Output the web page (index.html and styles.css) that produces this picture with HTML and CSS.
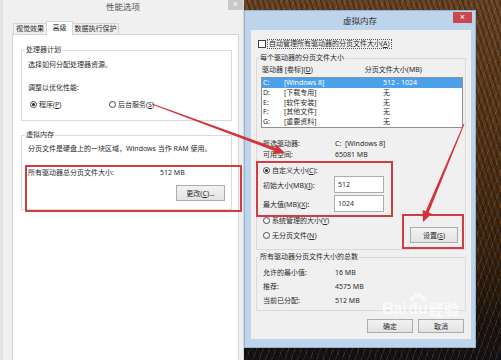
FILE: index.html
```html
<!DOCTYPE html>
<html lang="zh-CN">
<head>
  <meta charset="UTF-8" />
  <meta name="viewport" content="width=device-width, initial-scale=1.0"/>
  <title>虚拟内存</title>
  <link rel="stylesheet" href="styles.css">
</head>
<body>
<div class="desktop">

  <!-- 性能选项 window (behind) -->
  <div class="win perf">
    <div class="titlebar">
      <span class="title">性能选项</span>
      <span class="close">&#215;</span>
    </div>
    <div class="tabs">
      <div class="tab t1">视觉效果</div>
      <div class="tab t2 active">高级</div>
      <div class="tab t3">数据执行保护</div>
    </div>
    <div class="panel">
      <div class="group cpu">
        <div class="legend">处理器计划</div>
        <p class="line mt5">选择如何分配处理器资源。</p>
        <p class="line mt13">调整以优化性能:</p>
        <div class="line radios mt7">
          <label class="opt first"><span class="radio on"></span>程序(<u>P</u>)</label>
          <label class="opt"><span class="radio"></span>后台服务(<u>S</u>)</label>
        </div>
      </div>
      <div class="group vm">
        <div class="legend">虚拟内存</div>
        <p class="line mt4">分页文件是硬盘上的一块区域，Windows 当作 RAM 使用。</p>
        <div class="line total mt14"><span class="lbl">所有驱动器总分页文件大小:</span><span>512 MB</span></div>
        <button class="btn change">更改(<u>C</u>)...</button>
      </div>
    </div>
  </div>

  <!-- 虚拟内存 dialog -->
  <div class="win vmem">
    <div class="titlebar">
      <span class="title">虚拟内存</span>
      <span class="close">&#215;</span>
    </div>
    <div class="body">
      <div class="line check-row">
        <span class="checkbox"></span>
        <span class="focus">自动管理所有驱动器的分页文件大小(<u>A</u>)</span>
      </div>

      <div class="group drives">
        <div class="legend">每个驱动器的分页文件大小</div>
        <div class="line head mt2">
          <span class="hcol">驱动器 [卷标](<u>D</u>)</span>
          <span>分页文件大小(MB)</span>
        </div>
        <div class="listbox">
          <div class="row sel"><span class="c1">C:</span><span class="c2">[Windows 8]</span><span>512 - 1024</span></div>
          <div class="row"><span class="c1">D:</span><span class="c2">[下载专用]</span><span>无</span></div>
          <div class="row"><span class="c1">E:</span><span class="c2">[软件安装]</span><span>无</span></div>
          <div class="row"><span class="c1">F:</span><span class="c2">[其他文件]</span><span>无</span></div>
          <div class="row"><span class="c1">G:</span><span class="c2">[重要资料]</span><span>无</span></div>
        </div>

        <div class="line kv mt11"><span class="k">所选驱动器:</span><span>C:&nbsp;&nbsp;[Windows 8]</span></div>
        <div class="line kv mt1"><span class="k">可用空间:</span><span>65081 MB</span></div>

        <label class="line opt-row mt6"><span class="radio on"></span>自定义大小(<u>C</u>):</label>
        <div class="field">
          <span class="k">初始大小(MB)(<u>I</u>):</span>
          <span class="input">512</span>
        </div>
        <div class="field mt2">
          <span class="k">最大值(MB)(<u>X</u>):</span>
          <span class="input">1024</span>
        </div>

        <div class="tail">
          <div class="tail-opts">
            <label class="line opt-row"><span class="radio"></span>系统管理的大小(<u>Y</u>)</label>
            <label class="line opt-row mt5"><span class="radio"></span>无分页文件(<u>N</u>)</label>
          </div>
          <button class="btn set">设置(<u>S</u>)</button>
        </div>
      </div>

      <div class="group totals">
        <div class="legend">所有驱动器分页文件大小的总数</div>
        <div class="line kv mt6"><span class="k">允许的最小值:</span><span>16 MB</span></div>
        <div class="line kv mt4"><span class="k">推荐:</span><span>4575 MB</span></div>
        <div class="line kv mt4"><span class="k">当前已分配:</span><span>512 MB</span></div>
      </div>

      <div class="actions">
        <button class="btn act">确定</button>
        <button class="btn act">取消</button>
      </div>
    </div>
  </div>

  <!-- annotations -->
  <div class="mark m1"></div>
  <div class="mark m2"></div>
  <div class="mark m3"></div>

  <svg class="arrows" width="501" height="360" viewBox="0 0 501 360">
    <polygon points="151.9,104.4 274.1,150.7 273.0,153.9 285,153 276.4,144.5 275.3,147.7 152.1,103.6" />
    <polygon points="463.6,123.8 425.7,211.2 422.6,209.9 423,222 431.8,213.7 428.7,212.4 464.4,124.2" />
  </svg>

  <div class="wm">
    <span>Bai</span>
    <span class="paw">
      <svg width="20" height="9" viewBox="0 0 20 11">
        <ellipse cx="3" cy="7" rx="2.4" ry="3" />
        <ellipse cx="7.5" cy="3" rx="2.4" ry="3" />
        <ellipse cx="12.5" cy="3" rx="2.4" ry="3" />
        <ellipse cx="17" cy="7" rx="2.4" ry="3" />
      </svg>
      <span>du</span>
    </span>
    <span class="cn">经验</span>
  </div>

</div>
</body>
</html>
```

FILE: styles.css
```css
* {
  box-sizing: border-box;
  margin: 0; padding: 0;
}
body {
  font-family: "Noto Sans", "Noto Sans CJK SC", sans-serif;
  font-size: 7px;
  color: #2b2b2b;
}
u {
  text-decoration: underline;
}

.desktop {
  position: relative;
  width: 501px;
  height: 360px;
  overflow: hidden;
  background:
    repeating-linear-gradient(72deg, rgba(0,0,0,0.28) 0 2px, rgba(0,0,0,0) 2px 5px),
    repeating-linear-gradient(110deg, rgba(190,120,60,0.25) 0 1px, rgba(0,0,0,0) 1px 6px),
    linear-gradient(180deg, #6a4426 0%, #553519 40%, #3a2512 70%, #1c1510 90%, #141218 100%);
}

.win {
  position: absolute;
}
.titlebar {
  position: relative;
  text-align: center;
}
.title {
  font-size: 8.5px;
  color: #3a3a3a;
}
.close {
  position: absolute;
  color: #fff;
  text-align: center;
  font-family: "Liberation Sans", sans-serif;
}

.line {
  height: 10px;
  line-height: 10px;
  white-space: nowrap;
}
.mt1 { margin-top: 1px; }
.mt2 { margin-top: 2px; }
.mt4 { margin-top: 4px; }
.mt5 { margin-top: 5px; }
.mt6 { margin-top: 6px; }
.mt7 { margin-top: 7px; }
.mt11 { margin-top: 11px; }
.mt13 { margin-top: 13px; }
.mt14 { margin-top: 14px; }

.group {
  border: 1px solid #dadada;
}
.legend {
  display: table;
  height: 10px;
  line-height: 10px;
  margin: -6px 0 0 -3px;
  padding: 0 1px;
  white-space: nowrap;
}

.radio {
  display: inline-block;
  width: 7px; height: 7px;
  border: 1px solid #444;
  border-radius: 50%;
  background: #fff;
  margin-right: 2px;
  vertical-align: -1px;
  position: relative;
}
.radio.on::after {
  content: "";
  position: absolute;
  left: 1px; top: 1px;
  width: 3px; height: 3px;
  border-radius: 50%;
  background: #222;
}

.btn {
  display: block;
  font-family: inherit;
  font-size: 7px;
  color: #2b2b2b;
  background: linear-gradient(#f2f2f2, #e3e3e3);
  border: 1px solid #acacac;
}

/* 性能选项 */
.perf {
  left: 0; top: 0;
  width: 244px; height: 360px;
  background: #f0f0f0;
  border-left: 3px solid #e2e2e2;
  border-right: 1px solid #d6d6d6;
}
.perf .titlebar {
  height: 21px;
}
.perf .title {
  line-height: 14px;
  color: #555;
}
.perf .close {
  right: 0; top: 0;
  width: 15px; height: 10px;
  background: #c8c8c8;
  font-size: 9px;
  line-height: 9px;
}

.tabs {
  display: flex;
  align-items: flex-end;
  height: 13px;
  margin-left: 10px;
}
.tab {
  height: 11px;
  line-height: 10px;
  text-align: center;
  border: 1px solid #d6d6d6;
  border-bottom: none;
  background: #f0f0f0;
  white-space: nowrap;
}
.t1 { width: 34px; }
.t2 { width: 27px; margin-left: -1px; }
.t3 { width: 47px; margin-left: -1px; }
.tab.active {
  height: 14px;
  line-height: 12px;
  background: #fff;
  margin-bottom: -1px;
  position: relative;
  z-index: 1;
}

.panel {
  margin-left: 9px;
  width: 227px;
  height: 340px;
  background: #fff;
  border: 1px solid #d6d6d6;
  padding: 0 6px 0 8px;
}
.panel .legend {
  background: #fff;
}
.cpu {
  margin-top: 15px;
  padding: 0 6px 10px;
}
.vm {
  margin-top: 14px;
  padding: 0 6px 8px;
}
.radios {
  display: flex;
  align-items: center;
}
.opt.first {
  margin-left: 2px;
  width: 79px;
}
.total .lbl {
  display: inline-block;
  width: 132px;
}
.change {
  width: 49px;
  height: 16px;
  margin: 7px 0 0 auto;
}

/* 虚拟内存 */
.vmem {
  left: 244px; top: 10px;
  width: 232px; height: 338px;
  background: #bed4eb;
  border: 1px solid #93b3d6;
}
.vmem .titlebar {
  height: 19px;
  line-height: 19px;
}
.vmem .title {
  color: #333;
}
.vmem .close {
  left: 208px; top: 1px;
  width: 19px; height: 11px;
  background: #c9474d;
  font-size: 9px;
  line-height: 10px;
}
.body {
  margin: 0 4px 0 6px;
  height: 309px;
  background: #f0f0f0;
  padding: 9px 5px 0;
}
.body .legend {
  background: #f0f0f0;
}
.check-row {
  display: flex;
  align-items: center;
  padding-left: 2px;
}
.checkbox {
  width: 8px; height: 8px;
  border: 1px solid #444;
  background: #fff;
  margin-right: 1px;
}
.focus {
  height: 10px;
  line-height: 8px;
  padding: 0 1px;
  border: 1px dotted #555;
}

.drives {
  margin-top: 9px;
  padding: 0 2px 6px 5px;
}
.head .hcol {
  display: inline-block;
  width: 101px;
}
.listbox {
  margin: 2px 0 0 -1px;
  height: 51px;
  background: #fff;
  border: 1px solid #8a8f98;
}
.row {
  display: flex;
  height: 9.8px;
  line-height: 9.8px;
  padding-left: 1px;
  white-space: nowrap;
}
.row.sel {
  background: #4ba0ea;
  color: #fff;
}
.row .c1 { width: 21px; }
.row .c2 { width: 99px; }

.kv {
  padding-left: 1px;
}
.kv .k, .field .k {
  display: inline-block;
  width: 72px;
}
.opt-row {
  display: block;
  padding-left: 1px;
}
.field {
  display: flex;
  align-items: center;
  height: 17px;
  padding-left: 1px;
  white-space: nowrap;
}
.field .k {
  width: 71px;
}
.input {
  width: 50px;
  height: 17px;
  line-height: 15px;
  padding-left: 3px;
  background: #fff;
  border: 1px solid #abadb3;
}
.tail {
  display: flex;
  margin-top: 4px;
}
.set {
  width: 48px;
  height: 16px;
  margin: 11px 5px 0 auto;
}

.totals {
  margin-top: 7px;
  padding: 0 5px 4px;
}

.actions {
  display: flex;
  justify-content: flex-end;
  gap: 5px;
  margin: 8px 2px 0 0;
}
.act {
  width: 46px;
  height: 14px;
}

/* annotations */
.mark {
  position: absolute;
  border: 2px solid #d23c44;
}
.m1 { left: 25px; top: 165px; width: 217px; height: 47px; }
.m2 { left: 256px; top: 161px; width: 137px; height: 56px; }
.m3 { left: 402px; top: 214px; width: 62px; height: 35px; }

.arrows {
  position: absolute;
  left: 0; top: 0;
  pointer-events: none;
}
.arrows polygon {
  fill: #d6323b;
}

.wm {
  position: absolute;
  left: 382px; top: 293px;
  display: flex;
  align-items: flex-end;
  color: rgba(255,255,255,0.72);
  font-family: "Liberation Sans", sans-serif;
  font-weight: bold;
  font-size: 16px;
  line-height: 14px;
  pointer-events: none;
}
.wm .paw {
  display: flex;
  flex-direction: column;
  align-items: center;
  margin-left: 1px;
}
.wm .paw svg {
  fill: rgba(255,255,255,0.72);
}
.wm .cn {
  font-family: "Noto Sans CJK SC", sans-serif;
  font-size: 15px;
  margin-left: 1px;
}
```
